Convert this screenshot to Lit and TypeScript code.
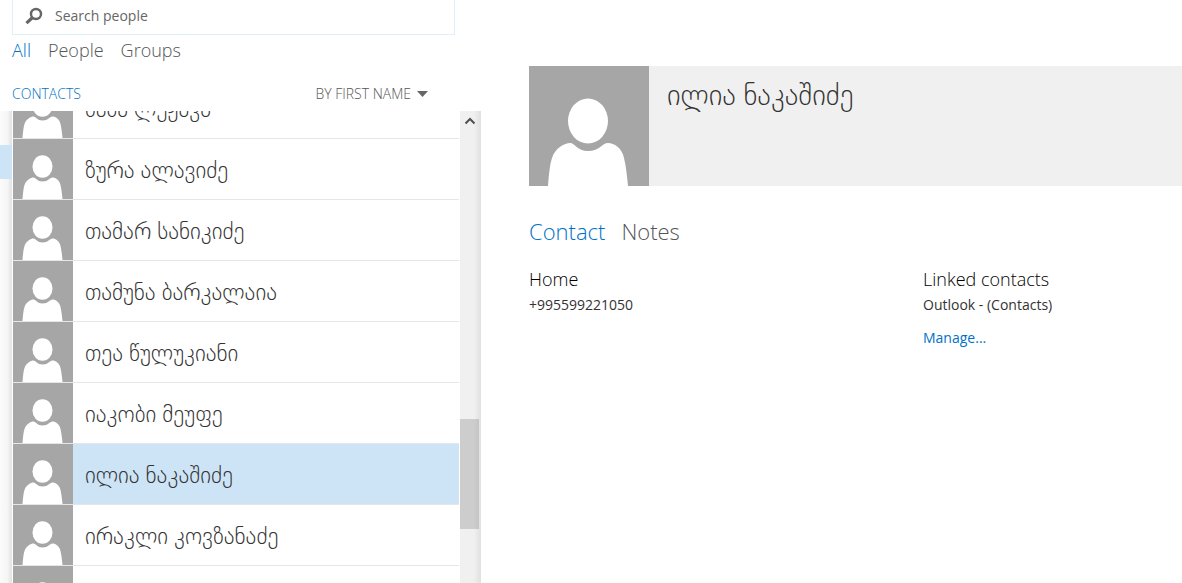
import { LitElement, html, css } from "lit";
import { customElement, state, query } from "lit/decorators.js";
import { classMap } from "lit/directives/class-map.js";

const CONTACTS = [
  "ზაზა ლეჟავა",
  "ზურა ალავიძე",
  "თამარ სანიკიძე",
  "თამუნა ბარკალაია",
  "თეა წულუკიანი",
  "იაკობი მეუფე",
  "ილია ნაკაშიძე",
  "ირაკლი კოვზანაძე",
  "",
  "",
];

@customElement("person-avatar")
export class PersonAvatar extends LitElement {
  static styles = css`
    :host {
      display: block;
      background: #a6a6a6;
    }
    .figure {
      display: block;
      width: 100%;
      height: 100%;
    }
  `;

  render() {
    return html`<svg class="figure" viewBox="0 0 120 120" aria-hidden="true">
      <ellipse cx="59" cy="55" rx="20" ry="22.5" fill="#fff" />
      <path
        fill="#fff"
        d="M19 120C20 107 21 98 23 92C26 82 36 77 41 77C46 77 48 85 59 85C71 85 73 77 79 77C85 77 93 82 95 92C97 100 98 110 99 120Z"
      />
    </svg>`;
  }
}

@customElement("contact-list")
export class ContactList extends LitElement {
  static styles = css`
    :host {
      display: flex;
      flex: 1;
      min-height: 0;
      overflow: hidden;
    }
    .gutter {
      flex: none;
      width: 12px;
      background: linear-gradient(to right, #fbfbfb, #f6f6f6 60%, #e2e2e2);
    }
    .mark {
      height: 34px;
      margin-top: 34px;
      background: #cde4f7;
    }
    .rows {
      flex: 1;
      min-width: 0;
      margin: 0;
      padding: 0 0 0 1px;
      list-style: none;
      overflow: hidden;
    }
    .row {
      display: flex;
      width: 100%;
      height: 61px;
      padding: 0;
      border: 0;
      border-bottom: 1px solid #e6e6e6;
      background: #fff;
      color: #333;
      font: inherit;
      font-size: 23px;
      font-weight: 300;
      text-align: left;
      align-items: center;
      cursor: pointer;
    }
    .selected {
      background: #cde4f7;
    }
    .photo {
      flex: none;
      width: 60px;
      height: 60px;
    }
    .name {
      padding-left: 12px;
      line-height: 28px;
      white-space: nowrap;
    }
    .bar {
      display: flex;
      flex-direction: column;
      flex: none;
      width: 21px;
      margin-left: 1px;
      background: linear-gradient(to right, #f0f0f0 14px, #e2e2e2 20px);
    }
    .up {
      display: flex;
      align-items: center;
      justify-content: center;
      height: 20px;
      width: 19px;
      padding: 0;
      border: 0;
      background: none;
    }
    .before {
      flex: 288 1 0;
    }
    .thumb {
      flex: 110 1 0;
      width: 19px;
      background: linear-gradient(to right, #cdcdcd 14px, #c4c4c4);
    }
    .after {
      flex: 54 1 0;
    }
  `;

  @state() private selected = 6;
  @query(".rows") private rows!: HTMLElement;

  firstUpdated() {
    this.rows.scrollTop = 33;
  }

  render() {
    return html`
      <div class="gutter"><div class="mark"></div></div>
      <ul class="rows">
        ${CONTACTS.map(
          (name, i) => html`<li>
            <button
              class=${classMap({ row: true, selected: i === this.selected })}
              @click=${() => (this.selected = i)}
            >
              <person-avatar class="photo"></person-avatar>
              <span class="name">${name}</span>
            </button>
          </li>`
        )}
      </ul>
      <div class="bar">
        <button class="up" aria-label="Scroll up" @click=${() => this.rows.scrollBy(0, -61)}>
          <svg width="10" height="8" viewBox="0 0 10 8">
            <path d="M0.5 6.5L5 2L9.5 6.5" fill="none" stroke="#505050" stroke-width="2" />
          </svg>
        </button>
        <div class="before"></div>
        <div class="thumb"></div>
        <div class="after"></div>
      </div>
    `;
  }
}

@customElement("app-root")
export class AppRoot extends LitElement {
  static styles = css`
    :host {
      display: flex;
      height: 100vh;
      overflow: hidden;
      background: #fff;
      color: #333;
      font-family: "Segoe UI", "Open Sans", "DejaVu Sans Light", "DejaVu Sans", sans-serif;
      font-size: 14px;
      line-height: 20px;
    }
    .side {
      display: flex;
      flex-direction: column;
      flex: none;
      width: 481px;
    }
    .search {
      display: flex;
      align-items: center;
      box-sizing: border-box;
      height: 35px;
      margin: 0 26px 0 12px;
      padding: 0 12px;
      gap: 12px;
      border: 1px solid #dff0f9;
      border-top: 0;
    }
    .glass {
      flex: none;
      margin-top: -2px;
    }
    .field {
      flex: 1;
      min-width: 0;
      height: 20px;
      margin: 0 0 2px;
      padding: 0;
      border: 0;
      outline: 0;
      background: none;
      color: #666;
      font: inherit;
    }
    .field::placeholder {
      color: #666;
      opacity: 1;
    }
    .tab {
      padding: 0;
      border: 0;
      background: none;
      color: #555;
      font: inherit;
      cursor: pointer;
    }
    .active {
      color: #0072c6;
    }
    .filters {
      display: flex;
      gap: 17px;
      padding: 3px 12px 1px;
      font-size: 18px;
      font-weight: 300;
      line-height: 24px;
    }
    .heading {
      display: flex;
      align-items: center;
      justify-content: space-between;
      height: 20px;
      padding: 21px 53px 7px 12px;
    }
    .title {
      margin: 0;
      color: #0072c6;
      font-size: 14px;
      font-weight: 300;
    }
    .sort {
      display: flex;
      align-items: center;
      gap: 6px;
      font-size: 14px;
      font-weight: 300;
    }
    .card {
      flex: 1;
      min-width: 0;
      padding: 66px 0 0 48px;
    }
    .banner {
      display: flex;
      background: #f0f0f0;
    }
    .photo {
      flex: none;
      width: 120px;
      height: 120px;
    }
    .name {
      margin: 0;
      padding: 12px 18px;
      font-size: 29px;
      font-weight: 300;
      line-height: 32px;
    }
    .tabs {
      display: flex;
      gap: 16px;
      padding-top: 29px;
      font-size: 22px;
      font-weight: 300;
      line-height: 32px;
    }
    .details {
      display: grid;
      grid-template-columns: 394fr 259fr;
      padding-top: 20px;
    }
    .label {
      margin: 0;
      color: #000;
      font-size: 18px;
      font-weight: 300;
      line-height: 24px;
    }
    .value {
      margin: 0;
      padding: 4px 0;
    }
    .link {
      display: inline-block;
      padding-top: 9px;
      color: #0072c6;
      text-decoration: none;
    }
  `;

  render() {
    return html`
      <section class="side">
        <label class="search">
          <svg class="glass" width="18" height="18" viewBox="0 0 18 18" aria-hidden="true">
            <circle cx="11" cy="7" r="5" fill="none" stroke="#666" stroke-width="2.4" />
            <path d="M7.5 10.5L1.5 16.2" stroke="#666" stroke-width="3.2" />
          </svg>
          <input class="field" type="text" placeholder="Search people" aria-label="Search people" />
        </label>
        <nav class="filters">
          <button class="tab active">All</button>
          <button class="tab">People</button>
          <button class="tab">Groups</button>
        </nav>
        <header class="heading">
          <h2 class="title">CONTACTS</h2>
          <button class="tab sort">
            BY FIRST NAME
            <svg width="11" height="6" viewBox="0 0 11 6" aria-hidden="true">
              <path d="M0 0H11L5.5 6Z" fill="#666" />
            </svg>
          </button>
        </header>
        <contact-list></contact-list>
      </section>
      <main class="card">
        <header class="banner">
          <person-avatar class="photo"></person-avatar>
          <h1 class="name">ილია ნაკაშიძე</h1>
        </header>
        <nav class="tabs">
          <button class="tab active">Contact</button>
          <button class="tab">Notes</button>
        </nav>
        <div class="details">
          <section>
            <h2 class="label">Home</h2>
            <p class="value">+995599221050</p>
          </section>
          <section>
            <h2 class="label">Linked contacts</h2>
            <p class="value">Outlook - (Contacts)</p>
            <a class="link" href="#manage">Manage...</a>
          </section>
        </div>
      </main>
    `;
  }
}
